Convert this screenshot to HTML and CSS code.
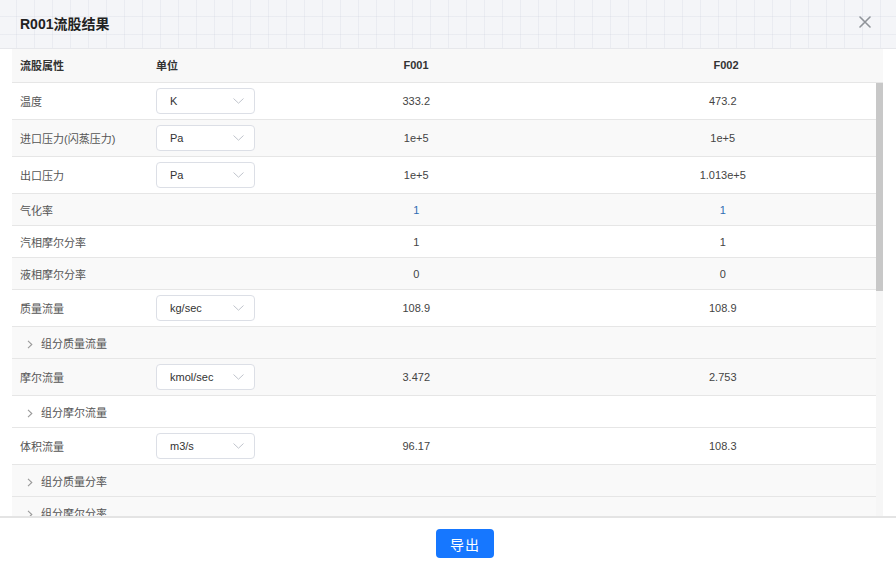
FILE: index.html
```html
<!DOCTYPE html>
<html lang="zh">
<head>
<meta charset="utf-8">
<title>R001流股结果</title>
<link rel="stylesheet" href="styles.css">
</head>
<body>
<div class="dialog">
  <header class="dlg-head">
    <h1 class="dlg-title">R001流股结果</h1>
    <button class="dlg-close" aria-label="关闭">
      <svg width="12" height="12" viewBox="0 0 12 12"><path d="M1 1L11 11M11 1L1 11" stroke="#8f9399" stroke-width="1.6" stroke-linecap="round" fill="none"/></svg>
    </button>
  </header>

  <div class="dlg-body">
    <table class="grid grid-head">
      <colgroup><col class="c-name"><col class="c-unit"><col class="c-val"><col class="c-val2"></colgroup>
      <thead>
        <tr><th class="t-left">流股属性</th><th class="t-left">单位</th><th>F001</th><th>F002</th></tr>
      </thead>
    </table>
    <div class="body-area">
      <div class="scroller">
        <table class="grid">
          <colgroup><col class="c-name"><col class="c-unit"><col class="c-val"><col class="c-val"></colgroup>
          <tbody>
            <tr class="r-sel"><td class="name">温度</td><td><div class="sel"><span>K</span><svg width="11" height="6" viewBox="0 0 11 6"><path d="M0.5 0.5L5.5 5.2L10.5 0.5" stroke="#c0c4cc" fill="none"/></svg></div></td><td>333.2</td><td>473.2</td></tr>
            <tr class="r-sel alt"><td class="name">进口压力(闪蒸压力)</td><td><div class="sel"><span>Pa</span><svg width="11" height="6" viewBox="0 0 11 6"><path d="M0.5 0.5L5.5 5.2L10.5 0.5" stroke="#c0c4cc" fill="none"/></svg></div></td><td>1e+5</td><td>1e+5</td></tr>
            <tr class="r-sel"><td class="name">出口压力</td><td><div class="sel"><span>Pa</span><svg width="11" height="6" viewBox="0 0 11 6"><path d="M0.5 0.5L5.5 5.2L10.5 0.5" stroke="#c0c4cc" fill="none"/></svg></div></td><td>1e+5</td><td>1.013e+5</td></tr>
            <tr class="alt"><td class="name">气化率</td><td></td><td class="blue">1</td><td class="blue">1</td></tr>
            <tr><td class="name">汽相摩尔分率</td><td></td><td>1</td><td>1</td></tr>
            <tr class="alt"><td class="name">液相摩尔分率</td><td></td><td>0</td><td>0</td></tr>
            <tr class="r-sel"><td class="name">质量流量</td><td><div class="sel"><span>kg/sec</span><svg width="11" height="6" viewBox="0 0 11 6"><path d="M0.5 0.5L5.5 5.2L10.5 0.5" stroke="#c0c4cc" fill="none"/></svg></div></td><td>108.9</td><td>108.9</td></tr>
            <tr class="alt"><td class="name sub" colspan="2"><span class="caret"><svg width="6" height="9" viewBox="0 0 6 9"><path d="M1 0.8L4.8 4.5L1 8.2" stroke="#9a9a9a" stroke-width="1.1" fill="none"/></svg></span>组分质量流量</td><td></td><td></td></tr>
            <tr class="r-sel alt"><td class="name">摩尔流量</td><td><div class="sel"><span>kmol/sec</span><svg width="11" height="6" viewBox="0 0 11 6"><path d="M0.5 0.5L5.5 5.2L10.5 0.5" stroke="#c0c4cc" fill="none"/></svg></div></td><td>3.472</td><td>2.753</td></tr>
            <tr><td class="name sub" colspan="2"><span class="caret"><svg width="6" height="9" viewBox="0 0 6 9"><path d="M1 0.8L4.8 4.5L1 8.2" stroke="#9a9a9a" stroke-width="1.1" fill="none"/></svg></span>组分摩尔流量</td><td></td><td></td></tr>
            <tr class="r-sel"><td class="name">体积流量</td><td><div class="sel"><span>m3/s</span><svg width="11" height="6" viewBox="0 0 11 6"><path d="M0.5 0.5L5.5 5.2L10.5 0.5" stroke="#c0c4cc" fill="none"/></svg></div></td><td>96.17</td><td>108.3</td></tr>
            <tr class="alt"><td class="name sub" colspan="2"><span class="caret"><svg width="6" height="9" viewBox="0 0 6 9"><path d="M1 0.8L4.8 4.5L1 8.2" stroke="#9a9a9a" stroke-width="1.1" fill="none"/></svg></span>组分质量分率</td><td></td><td></td></tr>
            <tr class="alt"><td class="name sub" colspan="2"><span class="caret"><svg width="6" height="9" viewBox="0 0 6 9"><path d="M1 0.8L4.8 4.5L1 8.2" stroke="#9a9a9a" stroke-width="1.1" fill="none"/></svg></span>组分摩尔分率</td><td></td><td></td></tr>
          </tbody>
        </table>
      </div>
      <div class="vbar"><div class="vbar-thumb"></div></div>
    </div>
  </div>

  <footer class="dlg-foot">
    <button class="btn-primary">导出</button>
  </footer>
</div>
</body>
</html>
```

FILE: styles.css
```css
* { box-sizing: border-box; }
html, body { margin: 0; padding: 0; background: #ffffff; }
body {
  font-family: "Liberation Sans", Arial, "Noto Sans CJK SC", sans-serif;
  color: #333;
  width: 896px;
  height: 569px;
  overflow: hidden;
}
.dialog {
  width: 896px;
  height: 569px;
  display: flex;
  flex-direction: column;
  background: #fff;
}
.dlg-head {
  height: 49px;
  flex: none;
  display: flex;
  align-items: center;
  justify-content: space-between;
  padding: 0 25px 0 20px;
  border-bottom: 1px solid #e6e7eb;
  background-color: #f4f5f8;
  background-image:
    linear-gradient(to right, rgba(200,204,214,0.22) 1px, transparent 1px),
    linear-gradient(to bottom, rgba(200,204,214,0.22) 1px, transparent 1px);
  background-size: 18px 18px;
  background-position: 16px 16px;
}
.dlg-title {
  margin: 0;
  font-size: 14px;
  font-weight: bold;
  color: #222;
  padding-bottom: 3px;
}
.dlg-close {
  border: 0;
  background: none;
  padding: 0;
  width: 12px;
  height: 12px;
  display: flex;
  margin-bottom: 5px;
}
.dlg-body {
  flex: 1;
  min-height: 0;
  display: flex;
  flex-direction: column;
  padding: 0 13px 0 12px;
}
.grid {
  width: 100%;
  border-collapse: collapse;
  table-layout: fixed;
  font-size: 11px;
}
.c-name { width: 136px; }
.c-unit { width: 115px; }
.grid-head { background: #f8f8f8; flex: none; }
.grid-head th {
  height: 33px;
  font-weight: bold;
  color: #333;
  text-align: center;
  border-bottom: 1px solid #e6e6e6;
  padding: 0 8px 1px;
  font-family: "Liberation Sans", "Noto Sans CJK SC", sans-serif;
}
.grid-head col.c-val2 { width: 314px; }
.grid-head th.t-left { text-align: left; }
.body-area {
  flex: 1;
  min-height: 0;
  display: flex;
}
.scroller {
  flex: 1;
  min-width: 0;
  overflow: hidden;
}
.vbar {
  width: 7px;
  flex: none;
  background: #f6f6f6;
}
.vbar-thumb {
  height: 208px;
  background: #c8c8c8;
}
.grid td {
  height: 32px;
  border-bottom: 1px solid #e6e6e6;
  padding: 0 8px;
  text-align: center;
  color: #444;
  white-space: nowrap;
}
.grid tr.r-sel td { height: 37px; }
.grid tr.alt td { background: #f9f9f9; }
.grid td.name {
  text-align: left;
  color: #555;
  font-family: "Liberation Sans", "Noto Sans CJK SC", sans-serif;
}
.grid td.sub { padding-left: 15px; }
.caret {
  display: inline-block;
  width: 14px;
  vertical-align: -1px;
}
.caret svg { display: block; }
.grid td.blue { color: #2f6db3; }
.sel {
  width: 99px;
  height: 26px;
  border: 1px solid #dcdfe6;
  border-radius: 4px;
  background: #fff;
  display: flex;
  align-items: center;
  justify-content: space-between;
  padding: 0 10px 0 13px;
  color: #333;
  font-size: 11px;
}
.sel svg { flex: none; }
.dlg-foot {
  height: 53px;
  flex: none;
  border-top: 2px solid #e4e4e4;
  display: flex;
  align-items: flex-start;
  justify-content: center;
  padding-top: 11px;
  padding-left: 34px;
}
.btn-primary {
  width: 58px;
  height: 29px;
  border: 0;
  border-radius: 4px;
  background: #1677ff;
  color: #fff;
  font-size: 14px;
  font-family: "Noto Sans CJK SC", sans-serif;
  letter-spacing: 1px;
  padding: 0;
}
```
